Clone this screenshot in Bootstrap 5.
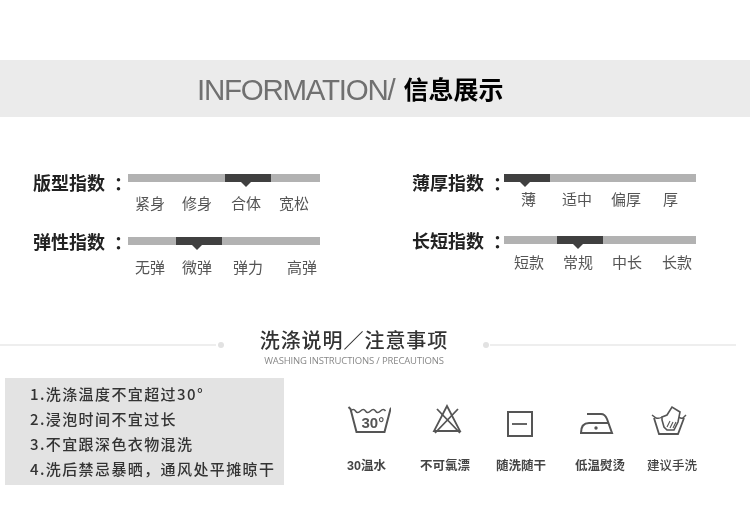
<!DOCTYPE html>
<html lang="zh-CN">
<head>
<meta charset="utf-8">
<title>信息展示</title>
<link href="https://cdn.jsdelivr.net/npm/bootstrap@5.3.0/dist/css/bootstrap.min.css" rel="stylesheet">
<style>
html,body{margin:0;background:#fff;overflow:hidden}
body{width:750px;height:522px;font-family:"Liberation Sans","Noto Sans CJK SC",sans-serif;}
.page-soft{filter:blur(.4px);height:522px;padding-top:60px;}
.info-band{height:57px;background:#ebebeb;padding-left:197px;}
.info-en{font-size:29.5px;color:#707070;letter-spacing:-1.25px;font-weight:400;position:relative;top:2px;}
.info-cn{font-size:25px;color:#000;font-weight:700;margin-left:9px;font-family:"Noto Sans CJK SC",sans-serif;}
.gauges{padding-top:57px;}
.gauge-col-l{width:412px;padding-left:33px;}
.gauge-name{width:95px;height:20px;margin-top:-2px;font:700 18px/20px "Noto Sans CJK SC",sans-serif;color:#222;white-space:nowrap;}
.gauge-name-r{width:92px;}
.gauge-name-low{margin-top:-6px;}
.gauge-colon{margin-left:9px;}
.gauge-body{width:192px;}
.track{height:8px;background:#b2b2b2;position:relative;}
.pin{position:absolute;top:0;width:46px;height:8px;background:#404040;}
.pin::after{content:"";position:absolute;left:16px;top:8px;border:5px solid transparent;border-top:5px solid #404040;border-bottom:0;}
.opts{font:400 15px/20px "Noto Sans CJK SC",sans-serif;color:#555;white-space:nowrap;}
.g2-l{margin-top:24px;}
.g2-r{margin-top:27px;}
.opts-l{margin-top:11px;}
.opts-l2{margin-top:12px;}
.opts-r{margin-top:7px;}
.opts-r2{margin-top:8px;}
.o1 span:nth-child(1){margin-left:7px}.o1 span:nth-child(2){margin-left:17px}.o1 span:nth-child(3){margin-left:19px}.o1 span:nth-child(4){margin-left:18px}
.o2 span:nth-child(1){margin-left:7px}.o2 span:nth-child(2){margin-left:17px}.o2 span:nth-child(3){margin-left:21px}.o2 span:nth-child(4){margin-left:24px}
.o3 span:nth-child(1){margin-left:17px}.o3 span:nth-child(2){margin-left:26px}.o3 span:nth-child(3){margin-left:19px}.o3 span:nth-child(4){margin-left:22px}
.o4 span:nth-child(1){margin-left:10px}.o4 span:nth-child(2){margin-left:19px}.o4 span:nth-child(3){margin-left:19px}.o4 span:nth-child(4){margin-left:20px}
.care-head{margin-top:52px;width:736px;height:41px;}
.rule{height:2px;background:#eee;}
.rule-dot{width:6px;height:6px;border-radius:50%;background:#e2e2e2;flex:none;}
.rule-side-l{width:225px;height:32px;align-self:flex-start;}
.rule-side-r{width:253px;height:32px;align-self:flex-start;}
.rule-l{flex:1;margin-right:2px}
.rule-r{flex:1;margin-left:1px}
.rule-dot-l{margin-right:1px;}
.care-mid{flex:1;text-align:center;}
.care-title{font:500 20px/22px "Noto Sans CJK SC",sans-serif;color:#333;letter-spacing:.95px;white-space:nowrap;}
.care-sub{font:400 9.5px/12px "Open Sans",sans-serif;color:#888;letter-spacing:-.15px;margin-top:4px;white-space:nowrap;}
.care-main{margin-top:8px;}
.notes{margin-left:5px;width:279px;height:107px;background:#e3e3e3;padding:3px 0 0 25px;flex:none;}
.note-line{font:500 15px/25px "Noto Sans CJK SC",sans-serif;color:#333;letter-spacing:1.4px;white-space:nowrap;height:25px;}
.symbols{display:grid;grid-template-columns:77px 80px 72px 86px 58px;margin-left:44px;padding-top:26px;}
.symbol{text-align:center;}
.symbol svg{display:block;margin:0 auto;width:48px;height:34px;fill:none;stroke:#555;stroke-width:2;}
.symbol-name{margin-top:19px;font:700 12.5px/16px "Noto Sans CJK SC",sans-serif;color:#444;white-space:nowrap;}
.symbol-num{font-family:"Liberation Sans",sans-serif;}
.wash-num{font:700 15px "Liberation Sans",sans-serif;fill:#555;stroke:none;}
.symbol-light{font-weight:500;}
</style>
</head>
<body>
<div class="page-soft">
<div class="info-band d-flex align-items-center">
  <span class="info-en">INFORMATION/</span><span class="info-cn">信息展示</span>
</div>
<div class="gauges d-flex">
  <div class="gauge-col-l">
    <div class="d-flex">
      <div class="gauge-name">版型指数<span class="gauge-colon">：</span></div>
      <div class="gauge-body">
        <div class="track"><div class="pin" style="left:97px"></div></div>
        <div class="opts opts-l o1"><span>紧身</span><span>修身</span><span>合体</span><span>宽松</span></div>
      </div>
    </div>
    <div class="d-flex g2-l">
      <div class="gauge-name gauge-name-low">弹性指数<span class="gauge-colon">：</span></div>
      <div class="gauge-body">
        <div class="track"><div class="pin" style="left:48px"></div></div>
        <div class="opts opts-l2 o2"><span>无弹</span><span>微弹</span><span>弹力</span><span>高弹</span></div>
      </div>
    </div>
  </div>
  <div>
    <div class="d-flex">
      <div class="gauge-name gauge-name-r">薄厚指数<span class="gauge-colon">：</span></div>
      <div class="gauge-body">
        <div class="track"><div class="pin" style="left:0"></div></div>
        <div class="opts opts-r o3"><span>薄</span><span>适中</span><span>偏厚</span><span>厚</span></div>
      </div>
    </div>
    <div class="d-flex g2-r">
      <div class="gauge-name gauge-name-r gauge-name-low">长短指数<span class="gauge-colon">：</span></div>
      <div class="gauge-body">
        <div class="track"><div class="pin" style="left:53px"></div></div>
        <div class="opts opts-r2 o4"><span>短款</span><span>常规</span><span>中长</span><span>长款</span></div>
      </div>
    </div>
  </div>
</div>
<div class="care-head d-flex">
  <div class="rule-side-l d-flex align-items-center"><div class="rule rule-l"></div><div class="rule-dot rule-dot-l"></div></div>
  <div class="care-mid">
    <div class="care-title">洗涤说明／注意事项</div>
    <div class="care-sub">WASHING INSTRUCTIONS / PRECAUTIONS</div>
  </div>
  <div class="rule-side-r d-flex align-items-center"><div class="rule-dot"></div><div class="rule rule-r"></div></div>
</div>
<div class="care-main d-flex">
  <div class="notes">
    <div class="note-line">1.洗涤温度不宜超过30°</div>
    <div class="note-line">2.浸泡时间不宜过长</div>
    <div class="note-line">3.不宜跟深色衣物混洗</div>
    <div class="note-line">4.洗后禁忌暴晒，通风处平摊晾干</div>
  </div>
  <div class="symbols">
    <div class="symbol">
      <svg viewBox="342.5 404 48 34"><path d="M348 407l2 2 6 23h28l6-23 2-2"/><path d="M350 411q3-3 5 0t5 0 5 0 5 0 5 0 5 0 5 0" stroke-width="1.500"/><text class="wash-num" x="361" y="428">30°</text></svg>
      <div class="symbol-name"><span class="symbol-num">30</span>温水</div>
    </div>
    <div class="symbol">
      <svg viewBox="421 404 48 34"><path d="M447 406L434 431H460Z" stroke-width="1.800"/><path d="M437 409L460 433M458 409L435 433" stroke-width="1.800"/></svg>
      <div class="symbol-name">不可氯漂</div>
    </div>
    <div class="symbol">
      <svg viewBox="497 404 48 34"><rect x="508" y="412" width="24" height="24"/><path d="M512 424H527" stroke-width="1.800"/></svg>
      <div class="symbol-name">随洗随干</div>
    </div>
    <div class="symbol">
      <svg viewBox="576 404 48 34"><path d="M587 414H601q4 0 6 5l5 14H581q0-10 8-10H608"/><circle cx="596" cy="428" r="1.700" fill="#555" stroke="none"/></svg>
      <div class="symbol-name">低温熨烫</div>
    </div>
    <div class="symbol">
      <svg viewBox="648 404 48 34"><path d="M654 418l5 16h19l6-16" stroke-width="1.800"/><path d="M652 415l4 3q3 1 6-1M686 415l-3 3q-2 1-4-1" stroke-width="1.500"/><path d="M662 417l5-2 5-8 8 5-2 10-4 8h-7l-3-3-2-7Z" stroke-width="1.600" fill="#fff"/><path d="M667 427l3-6M670 428l3-6M673 428l3-6" stroke-width="1.100"/></svg>
      <div class="symbol-name symbol-light">建议手洗</div>
    </div>
  </div>
</div>
</div>
<script src="https://cdn.jsdelivr.net/npm/bootstrap@5.3.0/dist/js/bootstrap.bundle.min.js"></script>
</body>
</html>
